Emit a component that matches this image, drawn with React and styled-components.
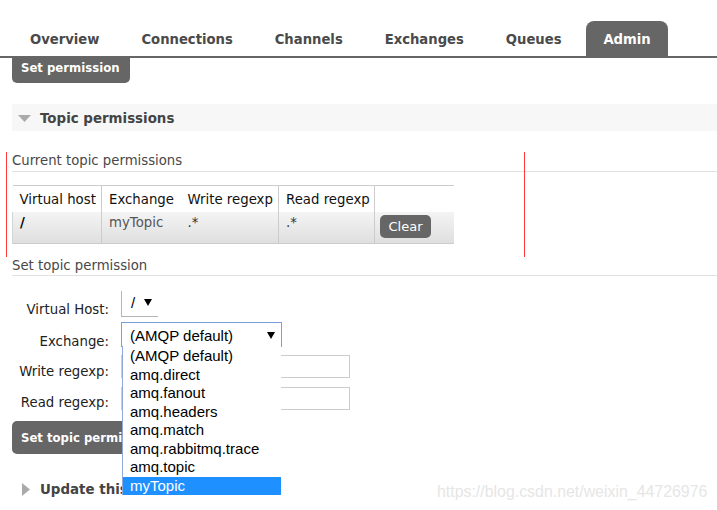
import React from 'react';
import styled, { createGlobalStyle } from 'styled-components';

const Global = createGlobalStyle`
  html, body { margin: 0; padding: 0; background: #fff; }
  body {
    font-family: "DejaVu Sans", Verdana, sans-serif;
    width: 717px;
    height: 510px;
    overflow: hidden;
  }
  * { box-sizing: border-box; }
`;

const Page = styled.div`
  position: relative;
  width: 717px;
  height: 510px;
  overflow: hidden;
`;

const Nav = styled.ul`
  display: flex;
  align-items: flex-end;
  gap: 7.9px;
  margin: 0;
  padding: 21px 0 0 13px;
  list-style: none;
  height: 58px;
  border-bottom: 2px solid #666;
`;

const Tab = styled.li`
  height: 35px;
  padding: 1px 17px 0;
  display: flex;
  align-items: center;
  font-weight: bold;
  font-size: 13.2px;
  color: ${(p) => (p.$active ? '#fff' : '#4a4a4a')};
  background: ${(p) => (p.$active ? '#666' : 'transparent')};
  border-radius: 8px 8px 0 0;
`;

const Main = styled.div`
  padding-left: 12px;
`;

const ClippedButton = styled.div`
  width: fit-content;
  height: 25px;
  padding: 2px 10px 0 9px;
  line-height: 17px;
  background: #666;
  color: #fff;
  font-weight: bold;
  font-size: 11.7px;
  border-radius: 0 0 5px 5px;
`;

const SectionHeader = styled.div`
  margin-top: ${(p) => p.$mt}px;
  height: 27px;
  display: flex;
  align-items: center;
  gap: ${(p) => p.$gap}px;
  padding: 2px 0 0 ${(p) => p.$pl}px;
  background: ${(p) => (p.$bg ? '#f7f7f7' : 'transparent')};
  font-weight: bold;
  font-size: 13.4px;
  color: #444;
`;

const SubHeading = styled.h3`
  margin: ${(p) => p.$mt}px 0 0;
  font-weight: normal;
  font-size: 13.25px;
  line-height: 16px;
  color: #484848;
  padding-bottom: ${(p) => p.$pb}px;
  border-bottom: 1px solid #e2e2e2;
`;

const Table = styled.table`
  margin-top: 13px;
  border-collapse: collapse;
  table-layout: fixed;
  width: 441px;
  font-size: 13.3px;
`;

const HeadRow = styled.tr`
  height: 26px;
  border-top: 1px solid #ccc;
`;

const Th = styled.th`
  font-weight: normal;
  text-align: left;
  padding: 3px 7px 0;
  color: #111;
  line-height: 16px;
  white-space: nowrap;
  border-right: ${(p) => (p.$noBorder ? 'none' : '1px solid #ccc')};
`;

const DataRow = styled.tr`
  height: 32px;
  background: linear-gradient(#f4f4f4, #dfdfdf);
  border-bottom: 1px solid #ccc;
`;

const Td = styled.td`
  vertical-align: top;
  padding: ${(p) => (p.$btn ? '3px 5px' : '3px 7px')};
  line-height: 16px;
  color: ${(p) => p.$color || '#333'};
  font-weight: ${(p) => (p.$bold ? 'bold' : 'normal')};
  border-right: ${(p) => (p.$noBorder ? 'none' : '1px solid #ccc')};
  border-left: ${(p) => (p.$first ? '1px solid #d4d4d4' : 'none')};
  white-space: nowrap;
`;

const SmallButton = styled.div`
  width: 51px;
  height: 23px;
  line-height: 23px;
  text-align: center;
  background: #666;
  color: #fff;
  font-size: 13px;
  border-radius: 5px;
`;

const Form = styled.div`
  margin-top: 15px;
`;

const FormRow = styled.div`
  display: flex;
  margin-top: ${(p) => p.$mt}px;
  height: ${(p) => p.$h}px;
`;

const Label = styled.div`
  width: 97px;
  margin-right: 12px;
  text-align: right;
  padding-top: ${(p) => p.$pt}px;
  font-size: 13.3px;
  line-height: 16px;
  color: #222;
  white-space: nowrap;
`;

const SmallSelect = styled.div`
  width: 37px;
  height: 26px;
  display: flex;
  align-items: flex-start;
  gap: 9px;
  padding: 3px 0 0 9px;
  border-left: 1px solid #b5b5b5;
  border-bottom: 1px solid #b5b5b5;
  font-family: "Liberation Sans", Arial, sans-serif;
  font-size: 15px;
  line-height: 18px;
  color: #000;
  svg { margin-top: 5px; }
`;

const SelectBox = styled.div`
  position: relative;
  width: 161px;
  height: 25px;
  display: flex;
  align-items: center;
  justify-content: space-between;
  padding: 1px 6px 0 8px;
  border: 1px solid #7d9fd8;
  font-family: "Liberation Sans", Arial, sans-serif;
  font-size: 15px;
  color: #000;
`;

const DropList = styled.ul`
  position: absolute;
  top: 100%;
  left: 0;
  width: 159px;
  margin: 0;
  padding: 1px 0 0;
  list-style: none;
  background: #fff;
  border-left: 1px solid #8fa9d8;
  z-index: 10;
`;

const DropItem = styled.li`
  height: 18.5px;
  line-height: 18.5px;
  padding-left: 7px;
  white-space: nowrap;
  background: ${(p) => (p.$selected ? '#1e90ff' : '#fff')};
  color: ${(p) => (p.$selected ? '#fff' : '#000')};
`;

const TextInput = styled.div`
  width: 229px;
  height: 23px;
  border: 1px solid #ccc;
  background: #fff;
`;

const BigButton = styled.div`
  margin-top: 11px;
  width: fit-content;
  height: 33px;
  line-height: 31px;
  padding: 2px 10px 0 9px;
  background: #666;
  color: #fff;
  font-weight: bold;
  font-size: 11.7px;
  border-radius: 5px;
`;

const RedLine = styled.div`
  position: absolute;
  top: 152px;
  left: ${(p) => p.$x}px;
  width: 1px;
  height: 105px;
  background: #ff3b3b;
`;

const Watermark = styled.div`
  position: absolute;
  left: 437px;
  top: 483px;
  font-family: "Liberation Sans", Arial, sans-serif;
  font-size: 15.9px;
  line-height: 18px;
  color: #e6e6e6;
  white-space: nowrap;
`;

const Arrow = () => (
  <svg width="8" height="7" viewBox="0 0 8 7">
    <polygon points="0,0 8,0 4,7" fill="#000" />
  </svg>
);

const DownTri = () => (
  <svg width="13" height="7" viewBox="0 0 13 7">
    <polygon points="0,0 13,0 6.5,7" fill="#aaa" />
  </svg>
);

const RightTri = () => (
  <svg width="8" height="13" viewBox="0 0 8 13">
    <polygon points="0,0 8,6.5 0,13" fill="#aaa" />
  </svg>
);

const tabs = ['Overview', 'Connections', 'Channels', 'Exchanges', 'Queues', 'Admin'];
const exchanges = [
  '(AMQP default)',
  'amq.direct',
  'amq.fanout',
  'amq.headers',
  'amq.match',
  'amq.rabbitmq.trace',
  'amq.topic',
  'myTopic',
];

export default function App() {
  return (
    <Page>
      <Global />
      <Nav>
        {tabs.map((t) => (
          <Tab key={t} $active={t === 'Admin'}>
            {t}
          </Tab>
        ))}
      </Nav>
      <Main>
        <ClippedButton>Set permission</ClippedButton>

        <SectionHeader $mt={21} $pl={6} $gap={9} $bg>
          <DownTri />
          Topic permissions
        </SectionHeader>

        <SubHeading $mt={22} $pb={2}>Current topic permissions</SubHeading>

        <Table>
          <colgroup>
            <col style={{ width: 89 }} />
            <col style={{ width: 79 }} />
            <col style={{ width: 98 }} />
            <col style={{ width: 96 }} />
            <col style={{ width: 79 }} />
          </colgroup>
          <thead>
            <HeadRow>
              <Th>Virtual host</Th>
              <Th $noBorder>Exchange</Th>
              <Th>Write regexp</Th>
              <Th>Read regexp</Th>
              <Th $noBorder></Th>
            </HeadRow>
          </thead>
          <tbody>
            <DataRow>
              <Td $bold $first $color="#000">/</Td>
              <Td $noBorder $color="#555">myTopic</Td>
              <Td>.*</Td>
              <Td>.*</Td>
              <Td $btn $noBorder>
                <SmallButton>Clear</SmallButton>
              </Td>
            </DataRow>
          </tbody>
        </Table>

        <SubHeading $mt={14} $pb={1}>Set topic permission</SubHeading>

        <Form>
          <FormRow $mt={0} $h={26}>
            <Label $pt={11}>Virtual Host:</Label>
            <SmallSelect>
              <span>/</span>
              <Arrow />
            </SmallSelect>
          </FormRow>
          <FormRow $mt={5} $h={25}>
            <Label $pt={12}>Exchange:</Label>
            <SelectBox>
              <span>(AMQP default)</span>
              <Arrow />
              <DropList>
                {exchanges.map((e) => (
                  <DropItem key={e} $selected={e === 'myTopic'}>
                    {e}
                  </DropItem>
                ))}
              </DropList>
            </SelectBox>
          </FormRow>
          <FormRow $mt={8} $h={23}>
            <Label $pt={9}>Write regexp:</Label>
            <TextInput />
          </FormRow>
          <FormRow $mt={9} $h={23}>
            <Label $pt={8}>Read regexp:</Label>
            <TextInput />
          </FormRow>
          <BigButton>Set topic permission</BigButton>
        </Form>

        <SectionHeader $mt={21} $pl={10} $gap={10}>
          <RightTri />
          Update this user
        </SectionHeader>
      </Main>

      <RedLine $x={6} />
      <RedLine $x={524} />
      <Watermark>https://blog.csdn.net/weixin_44726976</Watermark>
    </Page>
  );
}
